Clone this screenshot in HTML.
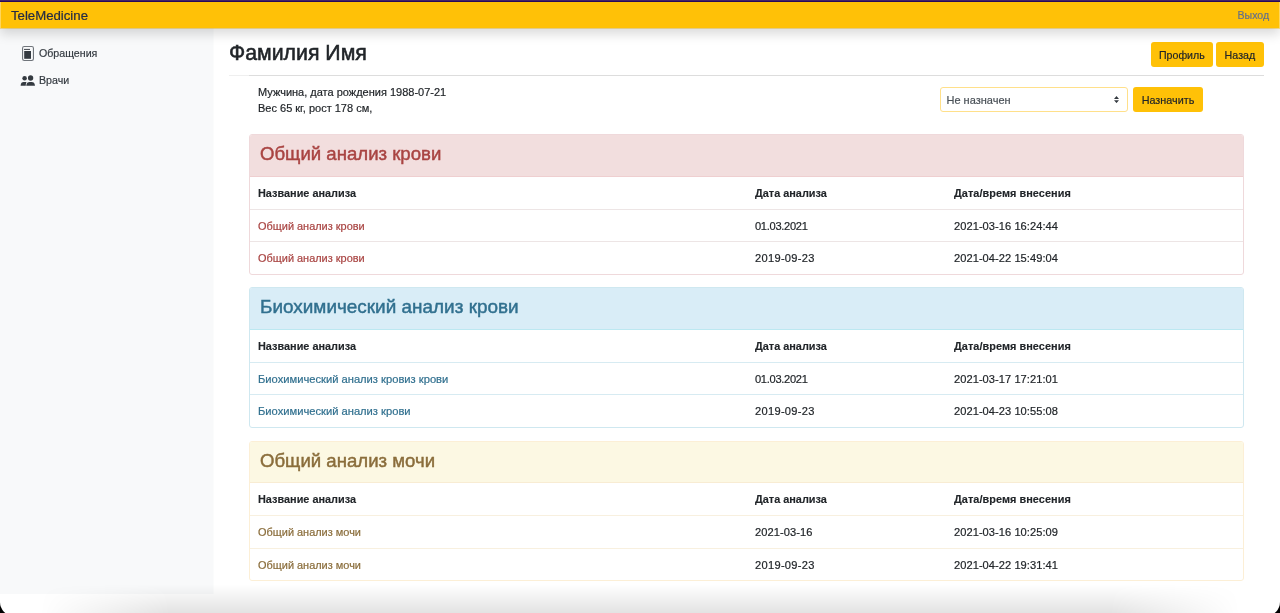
<!DOCTYPE html>
<html lang="ru">
<head>
<meta charset="utf-8">
<title>TeleMedicine</title>
<style>
*{box-sizing:border-box;margin:0;padding:0}
html,body{width:1280px;height:613px;overflow:hidden;background:#000}
body{font-family:"Liberation Sans",sans-serif;color:#212529;position:relative}
.win{will-change:transform;position:absolute;left:0;top:0;width:1280px;height:616px;background:#fff;border-radius:0 0 14px 14px;overflow:hidden}
.t{position:absolute;white-space:nowrap;line-height:normal}
.topline{position:absolute;left:0;top:0;width:1280px;height:2px;background:linear-gradient(#44246a 0,#44246a 1px,#290a5b 1px,#290a5b 2px)}
.nav{position:absolute;left:0;top:2px;width:1280px;height:26px;background:#ffc107;z-index:3;box-shadow:0 6px 12px rgba(0,0,0,.15)}
.side{position:absolute;left:0;top:28px;width:213px;height:566px;background:#f8f9fa}
.navedge{position:absolute;left:0;top:28px;width:1280px;height:1px;background:rgba(255,193,7,.4);z-index:3}
.btn{position:absolute;background:#ffc107;border-radius:3px}
.hr{position:absolute;left:229px;top:75px;width:1035px;height:1px;background:#dddddd}
.select{position:absolute;left:940px;top:87px;width:188px;height:25px;border:1px solid #ffe08a;border-radius:3px;background:#fff}
.panel{position:absolute;left:249px;width:995px;height:141px;border:1px solid;border-radius:3px;overflow:hidden;background:#fff}
.ph{position:absolute;left:0;top:0;width:100%;height:42px;border-bottom:1px solid}
.hd{left:10px;top:7.9px;font-size:18.6px;-webkit-text-stroke:0.45px currentColor}
.p2 .hd{font-size:18.95px;top:8.4px}
.row{position:absolute;left:0;width:100%;height:33px;border-top:1px solid}
.c{position:absolute;top:10px;font-size:10.95px;white-space:nowrap;-webkit-text-stroke:0.2px currentColor}
.c1{left:8px}.c2{left:505px}.c3{left:704px}
.c2{font-size:11.1px;top:9.86px}.c3{font-size:11.1px;top:9.86px;letter-spacing:0.05px}
.th .c{font-weight:bold;color:#212529;font-size:10.9px;top:10.05px;-webkit-text-stroke:0.12px #212529}
.p1{top:134px;border-color:#efd9db}
.p1 .ph{background:#f2dede;border-color:#efcfd0;color:#a94442}
.p1 .row{border-color:#ede5e5}
.p1 .lnk{color:#a94442}
.p2{top:287px;border-color:#cfe8f0}
.p2 .ph{background:#d9edf7;border-color:#bce8f1;color:#31708f}
.p2 .row{border-color:#d7ebf2}
.p2 .lnk{color:#31708f;font-size:11.18px;top:9.8px}
.p3{top:441px;height:140px;border-color:#fcefd6}
.p3 .ph{height:41px}.p3 .hd{top:7.7px}.p3 .th{top:41px!important;height:32px}.p3 .r1{top:73px!important}
.p3 .ph{background:#fcf8e3;border-color:#f8ecd3;color:#8a6d3b}
.p3 .row{border-color:#f8f0df}
.p3 .lnk{color:#8a6d3b}
.shade{position:absolute;left:0;top:584px;width:1280px;height:32px;background:linear-gradient(to bottom,rgba(0,0,0,0),rgba(0,0,0,.12));-webkit-mask-image:linear-gradient(to right,transparent 40px,#000 170px,#000 1110px,transparent 1240px)}
</style>
</head>
<body>
<div class="win">
<div class="topline"></div>
<div class="navedge"></div>
<div class="nav">
  <div class="t" style="left:11px;top:5.8px;font-size:13.2px;color:#242b45;-webkit-text-stroke:0.2px #242b45">TeleMedicine</div>
  <div class="t" style="left:1237.5px;top:7.4px;font-size:10.6px;color:#65708a;-webkit-text-stroke:0.18px #65708a">Выход</div>
</div>
<div class="side"><div style="position:absolute;left:213px;top:0;width:1px;height:100%;background:#f8f9fa;opacity:.5"></div>
  <svg style="position:absolute;left:22px;top:18px" width="12" height="15" viewBox="0 0 12 15"><rect x="0.55" y="0.55" width="10.9" height="13.9" rx="1.7" fill="none" stroke="#70757b" stroke-width="1.1"/><rect x="2" y="2.9" width="6" height="1.1" fill="#50555b"/><rect x="2.2" y="5" width="6.8" height="7.8" fill="#343a40"/></svg>
  <div class="t" style="left:39px;top:19px;font-size:10.65px;color:#343a40;-webkit-text-stroke:0.18px #343a40">Обращения</div>
  <svg style="position:absolute;left:20px;top:47px" width="16" height="12" viewBox="0 0 16 12"><circle cx="4.6" cy="3.3" r="2.25" fill="#343a40"/><circle cx="10.6" cy="3.0" r="2.65" fill="#343a40"/><path d="M0.6 10.8 L0.9 9.1 C1.2 7.8 2.2 7.1 3.5 7.1 L6.6 7.1 C6 7.8 5.8 9.4 5.8 10.8Z" fill="#343a40"/><path d="M6.2 10.8 L6.6 9 C7 7.8 8 7 9.5 7 L11.8 7 C13.3 7 14.3 7.8 14.6 9 L15 10.8Z" fill="#343a40"/></svg>
  <div class="t" style="left:39px;top:46.4px;font-size:10.65px;color:#343a40;-webkit-text-stroke:0.18px #343a40">Врачи</div>
</div>

<div class="t" style="left:229px;top:41px;font-size:21.3px;color:#212529;-webkit-text-stroke:0.55px #212529">Фамилия Имя</div>
<div class="btn" style="left:1151px;top:42px;width:62px;height:25px"></div>
<div class="t" style="left:1159px;top:48.8px;font-size:10.6px;color:#212529;-webkit-text-stroke:0.18px #212529">Профиль</div>
<div class="btn" style="left:1216px;top:42px;width:48px;height:25px"></div>
<div class="t" style="left:1224.6px;top:48.8px;font-size:10.7px;color:#212529;-webkit-text-stroke:0.18px #212529">Назад</div>
<div class="hr"></div><div style="position:absolute;left:229px;top:75px;width:20px;height:1px;background:#efefef"></div>

<div class="t" style="left:258px;top:85.9px;font-size:11px;color:#212529;-webkit-text-stroke:0.18px #212529">Мужчина, дата рождения 1988-07-21</div>
<div class="t" style="left:258px;top:102px;font-size:11px;color:#212529;-webkit-text-stroke:0.18px #212529">Вес 65 кг, рост 178 см,</div>

<div class="select">
  <div class="t" style="left:5.5px;top:6px;font-size:11px;color:#495057;-webkit-text-stroke:0.18px #495057">Не назначен</div>
  <svg style="position:absolute;left:173px;top:7.9px" width="5" height="7.2" viewBox="0 0 5 7.2"><path d="M0 2.9 L2.5 0 L5 2.9Z M0 4.2 L2.5 7.1 L5 4.2Z" fill="#343a40"/></svg>
</div>
<div class="btn" style="left:1133px;top:87px;width:70px;height:25px"></div>
<div class="t" style="left:1141.7px;top:93.6px;font-size:10.8px;color:#212529;-webkit-text-stroke:0.18px #212529">Назначить</div>

<div class="panel p1">
  <div class="ph"><div class="t hd">Общий анализ крови</div></div>
  <div class="row th" style="top:42px;border-top:0"><div class="c c1">Название анализа</div><div class="c c2">Дата анализа</div><div class="c c3">Дата/время внесения</div></div>
  <div class="row" style="top:74px"><div class="c c1 lnk">Общий анализ крови</div><div class="c c2" style="letter-spacing:-0.3px">01.03.2021</div><div class="c c3">2021-03-16 16:24:44</div></div>
  <div class="row" style="top:106px"><div class="c c1 lnk">Общий анализ крови</div><div class="c c2" style="letter-spacing:0.3px">2019-09-23</div><div class="c c3">2021-04-22 15:49:04</div></div>
</div>

<div class="panel p2">
  <div class="ph"><div class="t hd">Биохимический анализ крови</div></div>
  <div class="row th" style="top:42px;border-top:0"><div class="c c1">Название анализа</div><div class="c c2">Дата анализа</div><div class="c c3">Дата/время внесения</div></div>
  <div class="row" style="top:74px"><div class="c c1 lnk">Биохимический анализ кровиз крови</div><div class="c c2" style="letter-spacing:-0.3px">01.03.2021</div><div class="c c3">2021-03-17 17:21:01</div></div>
  <div class="row" style="top:106px"><div class="c c1 lnk">Биохимический анализ крови</div><div class="c c2" style="letter-spacing:0.3px">2019-09-23</div><div class="c c3">2021-04-23 10:55:08</div></div>
</div>

<div class="panel p3">
  <div class="ph"><div class="t hd">Общий анализ мочи</div></div>
  <div class="row th" style="top:42px;border-top:0"><div class="c c1">Название анализа</div><div class="c c2">Дата анализа</div><div class="c c3">Дата/время внесения</div></div>
  <div class="row r1" style="top:74px"><div class="c c1 lnk">Общий анализ мочи</div><div class="c c2" style="letter-spacing:0.08px">2021-03-16</div><div class="c c3">2021-03-16 10:25:09</div></div>
  <div class="row" style="top:106px"><div class="c c1 lnk">Общий анализ мочи</div><div class="c c2" style="letter-spacing:0.3px">2019-09-23</div><div class="c c3">2021-04-22 19:31:41</div></div>
</div>

<div class="shade"></div>
<div style="position:absolute;left:0;top:2px;width:1px;height:26px;background:rgba(255,255,255,.35);z-index:4"></div>
<div style="position:absolute;left:1279px;top:2px;width:1px;height:26px;background:rgba(255,255,255,.35);z-index:4"></div>
</div>
</body>
</html>
